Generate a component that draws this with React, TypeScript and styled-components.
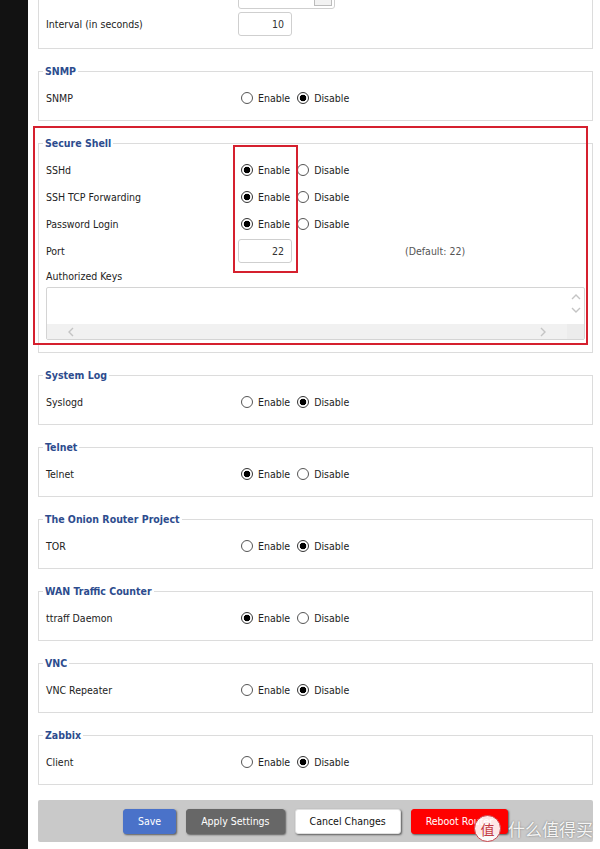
import React from "react";
import styled, { createGlobalStyle } from "styled-components";

type Toggle = { label: string; on: boolean };
type Section = { title: string; rows: Toggle[] };

const before: Section[] = [{ title: "SNMP", rows: [{ label: "SNMP", on: false }] }];

const after: Section[] = [
  { title: "System Log", rows: [{ label: "Syslogd", on: false }] },
  { title: "Telnet", rows: [{ label: "Telnet", on: true }] },
  { title: "The Onion Router Project", rows: [{ label: "TOR", on: false }] },
  { title: "WAN Traffic Counter", rows: [{ label: "ttraff Daemon", on: true }] },
  { title: "VNC", rows: [{ label: "VNC Repeater", on: false }] },
  { title: "Zabbix", rows: [{ label: "Client", on: false }] },
];

const sshRows: Toggle[] = [
  { label: "SSHd", on: true },
  { label: "SSH TCP Forwarding", on: true },
  { label: "Password Login", on: true },
];

function EnableDisable({ name, on }: { name: string; on: boolean }) {
  return (
    <Controls>
      <Choice>
        <Radio type="radio" name={name} defaultChecked={on} />
        Enable
      </Choice>
      <Choice>
        <Radio type="radio" name={name} defaultChecked={!on} />
        Disable
      </Choice>
    </Controls>
  );
}

function ToggleSection({ section }: { section: Section }) {
  return (
    <Fieldset>
      <Legend>{section.title}</Legend>
      {section.rows.map((r) => (
        <Row key={r.label}>
          <Label>{r.label}</Label>
          <EnableDisable name={r.label} on={r.on} />
        </Row>
      ))}
    </Fieldset>
  );
}

function Chevron({ dir }: { dir: "up" | "down" | "left" | "right" }) {
  const d = {
    up: "M1 6 L5 2 L9 6",
    down: "M1 2 L5 6 L9 2",
    left: "M6 1 L2 5 L6 9",
    right: "M2 1 L6 5 L2 9",
  }[dir];
  const vertical = dir === "up" || dir === "down";
  return (
    <svg width={vertical ? 10 : 8} height={vertical ? 8 : 10} viewBox={vertical ? "0 0 10 8" : "0 0 8 10"}>
      <path d={d} fill="none" stroke="#c4c4c4" strokeWidth="1.4" />
    </svg>
  );
}

export default function App() {
  return (
    <Page>
      <GlobalStyle />
      <Strip />
      <Main>
        {/* section scrolled mostly out of view: only the select's lower edge shows */}
        <Fieldset $pb={11}>
          <Legend />
          <Row>
            <Label />
            <Controls>
              <Select>
                <SelectButton />
              </Select>
            </Controls>
          </Row>
          <Row>
            <Label>Interval (in seconds)</Label>
            <Controls $flush>
              <TextInput defaultValue="10" />
            </Controls>
          </Row>
        </Fieldset>

        {before.map((s) => (
          <ToggleSection key={s.title} section={s} />
        ))}

        <Marked>
          <Fieldset $pb={12}>
            <Legend>Secure Shell</Legend>
            {sshRows.map((r) => (
              <Row key={r.label}>
                <Label>{r.label}</Label>
                <EnableDisable name={r.label} on={r.on} />
              </Row>
            ))}
            <Row>
              <Label>Port</Label>
              <Controls $flush>
                <TextInput defaultValue="22" />
                <DefaultNote>(Default: 22)</DefaultNote>
              </Controls>
            </Row>
            <KeysLabel>Authorized Keys</KeysLabel>
            <KeysBox>
              <KeysText />
              <VScroll>
                <Chevron dir="up" />
                <Chevron dir="down" />
              </VScroll>
              <HScroll>
                <Chevron dir="left" />
                <Chevron dir="right" />
              </HScroll>
              <Corner />
            </KeysBox>
          </Fieldset>
          <OuterMark />
          <InnerMark />
        </Marked>

        {after.map((s) => (
          <ToggleSection key={s.title} section={s} />
        ))}

        <ButtonBar>
          <Button $bg="#4a72c9" $fg="#fff">Save</Button>
          <Button $bg="#676767" $fg="#fff">Apply Settings</Button>
          <Button $bg="#fff" $fg="#111">Cancel Changes</Button>
          <Button $bg="#ff0000" $fg="#fff">Reboot Router</Button>
        </ButtonBar>
      </Main>

      <Watermark>
        <WatermarkLogo>值</WatermarkLogo>
        什么值得买
      </Watermark>
    </Page>
  );
}

const GlobalStyle = createGlobalStyle`
  html, body {
    margin: 0;
    padding: 0;
    background: #fff;
  }
  body {
    font-family: "DejaVu Sans Condensed", "DejaVu Sans", sans-serif;
    font-size: 10.5px;
    color: #222;
  }
`;

const Page = styled.div`
  position: relative;
  display: flex;
  height: 849px;
  overflow: hidden;
`;

const Strip = styled.div`
  width: 28px;
  flex: none;
  background: #121212;
`;

const Main = styled.div`
  flex: 1;
  display: flex;
  flex-direction: column;
  gap: 15px;
  padding: 0 7px 0 10px;
  background: #fff;

  & > :first-child {
    margin-top: -37px;
  }
`;

const Fieldset = styled.fieldset<{ $pb?: number }>`
  margin: 0;
  min-width: 0;
  border: 1px solid #dcdcdc;
  padding: 6px 7px ${(p) => p.$pb ?? 9}px;
`;

const Legend = styled.legend`
  min-height: 14px;
  padding: 0 2px;
  margin-left: -3px;
  font-weight: bold;
  line-height: 14px;
  color: #2d4c8e;
`;

const Row = styled.div`
  display: flex;
  align-items: center;
  height: 27px;
`;

const Label = styled.div`
  width: 192px;
  flex: none;
`;

const Controls = styled.div<{ $flush?: boolean }>`
  display: flex;
  align-items: center;
  padding-left: ${(p) => (p.$flush ? 0 : 3)}px;
`;

const Choice = styled.label`
  display: inline-flex;
  align-items: center;
  margin-right: 7px;
`;

const Radio = styled.input`
  appearance: none;
  width: 12px;
  height: 12px;
  margin: 0 5px 0 0;
  border: 1px solid #555;
  border-radius: 50%;
  background: #fff;

  &:checked {
    border-color: #333;
    background: radial-gradient(circle, #000 0 3px, #fff 3.6px);
  }
`;

const TextInput = styled.input`
  box-sizing: border-box;
  width: 54px;
  height: 24px;
  margin: 0;
  padding: 0 7px;
  border: 1px solid #cfcfcf;
  border-radius: 3px;
  font: inherit;
  color: #333;
  text-align: right;
`;

const Select = styled.div`
  box-sizing: border-box;
  position: relative;
  width: 97px;
  height: 24px;
  margin-left: -3px;
  border: 1px solid #cfcfcf;
  border-radius: 3px;
`;

const SelectButton = styled.span`
  position: absolute;
  right: 2px;
  top: 2px;
  bottom: 2px;
  width: 16px;
  border: 1px solid #bcbcbc;
  background: #f2f2f2;
`;

const DefaultNote = styled.span`
  margin-left: 113px;
  color: #555;
`;

const KeysLabel = styled.div`
  height: 23px;
  display: flex;
  align-items: center;
`;

const KeysBox = styled.div`
  box-sizing: border-box;
  height: 53px;
  display: grid;
  grid-template-columns: 1fr 17px;
  grid-template-rows: 1fr 15px;
  border: 1px solid #d4d4d4;
  border-radius: 2px;
  background: #fff;
`;

const KeysText = styled.div``;

const VScroll = styled.div`
  display: flex;
  flex-direction: column;
  align-items: center;
  gap: 5px;
  padding-top: 5px;
`;

const HScroll = styled.div`
  display: flex;
  align-items: center;
  justify-content: space-between;
  padding: 0 20px;
  background: #f1f1f1;
`;

const Corner = styled.div`
  background: #ececec;
`;

const Marked = styled.div`
  position: relative;
`;

const OuterMark = styled.div`
  position: absolute;
  left: -5px;
  top: -10px;
  width: 555px;
  height: 219px;
  box-sizing: border-box;
  border: 2px solid #d5202e;
  pointer-events: none;
`;

const InnerMark = styled.div`
  position: absolute;
  left: 195px;
  top: 9px;
  width: 65px;
  height: 128px;
  box-sizing: border-box;
  border: 2px solid #d5202e;
  pointer-events: none;
`;

const ButtonBar = styled.div`
  height: 42px;
  display: flex;
  align-items: center;
  justify-content: center;
  gap: 10px;
  background: #c9c9c9;
  border-radius: 2px;
`;

const Button = styled.button<{ $bg: string; $fg: string }>`
  height: 25px;
  padding: 0 14px;
  border: 1px solid ${(p) => (p.$bg === "#fff" ? "#e0e0e0" : p.$bg)};
  border-radius: 3px;
  background: ${(p) => p.$bg};
  color: ${(p) => p.$fg};
  font: inherit;
  font-size: 10.5px;
  box-shadow: 1px 1px 2px rgba(0, 0, 0, 0.55);
`;

const Watermark = styled.div`
  position: absolute;
  left: 474px;
  top: 815px;
  display: flex;
  align-items: center;
  gap: 7px;
  font-family: "Noto Sans CJK SC", sans-serif;
  font-size: 17px;
  color: rgba(255, 255, 255, 0.92);
  text-shadow: 0 0 2px rgba(0, 0, 0, 0.45);
  pointer-events: none;
`;

const WatermarkLogo = styled.span`
  width: 25px;
  height: 25px;
  border-radius: 50%;
  display: flex;
  align-items: center;
  justify-content: center;
  background: rgba(255, 255, 255, 0.9);
  border: 1.5px solid #c9474f;
  color: #c23a44;
  font-size: 14px;
  text-shadow: none;
`;
